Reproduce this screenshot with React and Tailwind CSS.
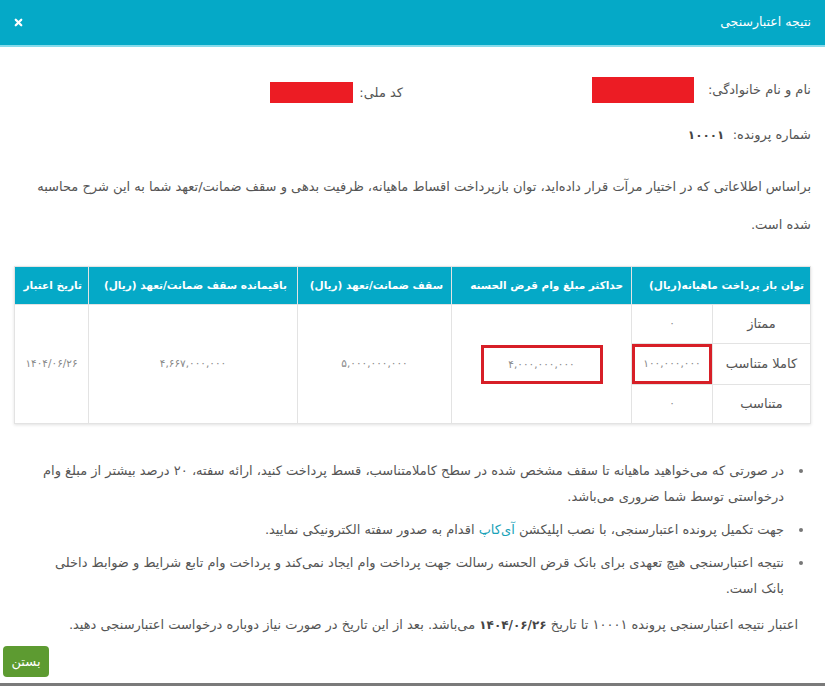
import React from "react";
import { X } from "lucide-react";

const scores = [
  { label: "ممتاز", value: "۰" },
  { label: "کاملا متناسب", value: "۱۰۰,۰۰۰,۰۰۰", marked: true },
  { label: "متناسب", value: "۰" },
];

const App = () => {
  return (
    <div
      dir="rtl"
      className="relative w-[825px] h-[686px] overflow-hidden bg-white border-b-[3px] border-[#7a7a7a] font-['DejaVu_Sans',sans-serif] text-[#555]"
    >
      {/* Header */}
      <div className="h-[47px] bg-[#05a9c7] border-b-2 border-[#86dbeb] flex items-center justify-between pr-[14px] pl-[13px]">
        <h1 className="text-white text-[12.5px]">نتیجه اعتبارسنجی</h1>
        <button className="text-white">
          <X size={11} strokeWidth={5} />
        </button>
      </div>

      <div className="px-[14px]">
        {/* Identity */}
        <div className="flex items-center mt-[30px] text-[13px]">
          <div className="w-[398px] flex items-center gap-[14px]">
            <span>نام و نام خانوادگی:</span>
            <span className="w-[102px] h-[26px] bg-[#ec1c24]"></span>
          </div>
          <div className="flex items-center gap-[6px] pr-[10px] pt-[5px]">
            <span>کد ملی:</span>
            <span className="w-[83px] h-[21px] bg-[#ec1c24]"></span>
          </div>
        </div>

        <div className="mt-[22px] text-[13px] leading-[20px]">
          شماره پرونده:&nbsp;&nbsp;<span className="font-bold text-[#444] text-[12px]">۱۰۰۰۱</span>
        </div>

        <p className="mt-[23px] text-[13px] leading-[38px]">
          براساس اطلاعاتی که در اختیار مرآت قرار داده‌اید، توان بازپرداخت اقساط ماهیانه، ظرفیت بدهی و سقف ضمانت/تعهد شما به این شرح محاسبه شده است.
        </p>

        {/* Result table */}
        <table className="mt-[22px] w-[796px] table-fixed border-collapse shadow-[0_1px_3px_rgba(0,0,0,0.12)]">
          <colgroup>
            <col className="w-[98px]" />
            <col className="w-[81px]" />
            <col className="w-[180px]" />
            <col className="w-[154px]" />
            <col className="w-[209px]" />
            <col className="w-[74px]" />
          </colgroup>
          <thead>
            <tr className="h-[38px] bg-[#05a9c7] text-white text-[10.5px] font-bold whitespace-nowrap">
              <th colSpan={2} className="text-right px-[6px] border border-[#e3e3e3]">توان باز پرداخت ماهیانه(ریال)</th>
              <th className="text-right px-[8px] border border-[#e3e3e3]">حداکثر مبلغ وام قرض الحسنه</th>
              <th className="text-right px-[8px] border border-[#e3e3e3]">سقف ضمانت/تعهد (ریال)</th>
              <th className="text-right px-[10px] border border-[#e3e3e3]">باقیمانده سقف ضمانت/تعهد (ریال)</th>
              <th className="text-right px-[6px] border border-[#e3e3e3]">تاریخ اعتبار</th>
            </tr>
          </thead>
          <tbody className="text-center">
            {scores.map((s, i) => (
              <tr key={s.label} className="h-[39px]">
                <td className="border border-[#e3e3e3] text-[13px] text-[#555]">{s.label}</td>
                <td className="border border-[#e3e3e3] p-0 text-[10.5px] text-[#888]">
                  {s.marked ? (
                    <div className="h-[40px] flex items-center justify-center border-[3px] border-[#d71f27]">{s.value}</div>
                  ) : (
                    s.value
                  )}
                </td>
                {i === 0 && (
                  <>
                    <td rowSpan={3} className="border border-[#e3e3e3] text-[10.5px] text-[#888]">
                      <span className="inline-block w-[122px] h-[39px] leading-[33px] border-[3px] border-[#d71f27]">
                        ۴,۰۰۰,۰۰۰,۰۰۰
                      </span>
                    </td>
                    <td rowSpan={3} className="border border-[#e3e3e3] text-[10.5px] text-[#888]">۵,۰۰۰,۰۰۰,۰۰۰</td>
                    <td rowSpan={3} className="border border-[#e3e3e3] text-[10.5px] text-[#888]">۴,۶۶۷,۰۰۰,۰۰۰</td>
                    <td rowSpan={3} className="border border-[#e3e3e3] text-[10.5px] text-[#888]">۱۴۰۴/۰۶/۲۶</td>
                  </>
                )}
              </tr>
            ))}
          </tbody>
        </table>

        {/* Notes */}
        <ul className="mt-[34px] pr-[23px] pl-[26px] list-disc marker:text-[#777] text-[13px] leading-[26px] space-y-[7px]">
          <li className="pr-[4px]">
            در صورتی که می‌خواهید ماهیانه تا سقف مشخص شده در سطح کاملامتناسب، قسط پرداخت کنید، ارائه سفته، ۲۰ درصد بیشتر از مبلغ وام درخواستی توسط شما ضروری می‌باشد.
          </li>
          <li className="pr-[4px]">
            جهت تکمیل پرونده اعتبارسنجی، با نصب اپلیکشن <span className="text-[#17a2b8]">آی‌کاپ</span> اقدام به صدور سفته الکترونیکی نمایید.
          </li>
          <li className="pr-[4px]">
            نتیجه اعتبارسنجی هیچ تعهدی برای بانک قرض الحسنه رسالت جهت پرداخت وام ایجاد نمی‌کند و پرداخت وام تابع شرایط و ضوابط داخلی بانک است.
          </li>
        </ul>

        <p className="mt-[10px] pr-[13px] text-[13px] leading-[26px]">
          اعتبار نتیجه اعتبارسنجی پرونده ۱۰۰۰۱ تا تاریخ <span className="font-bold text-[#444] text-[12px]">۱۴۰۴/۰۶/۲۶</span> می‌باشد. بعد از این تاریخ در صورت نیاز دوباره درخواست اعتبارسنجی دهید.
        </p>
      </div>

      {/* Footer */}
      <div className="absolute left-[3px] bottom-[6px]">
        <button className="w-[46px] h-[31px] rounded-[4px] bg-[#5d9b31] text-white text-[13px]">بستن</button>
      </div>
    </div>
  );
};

export default App;
